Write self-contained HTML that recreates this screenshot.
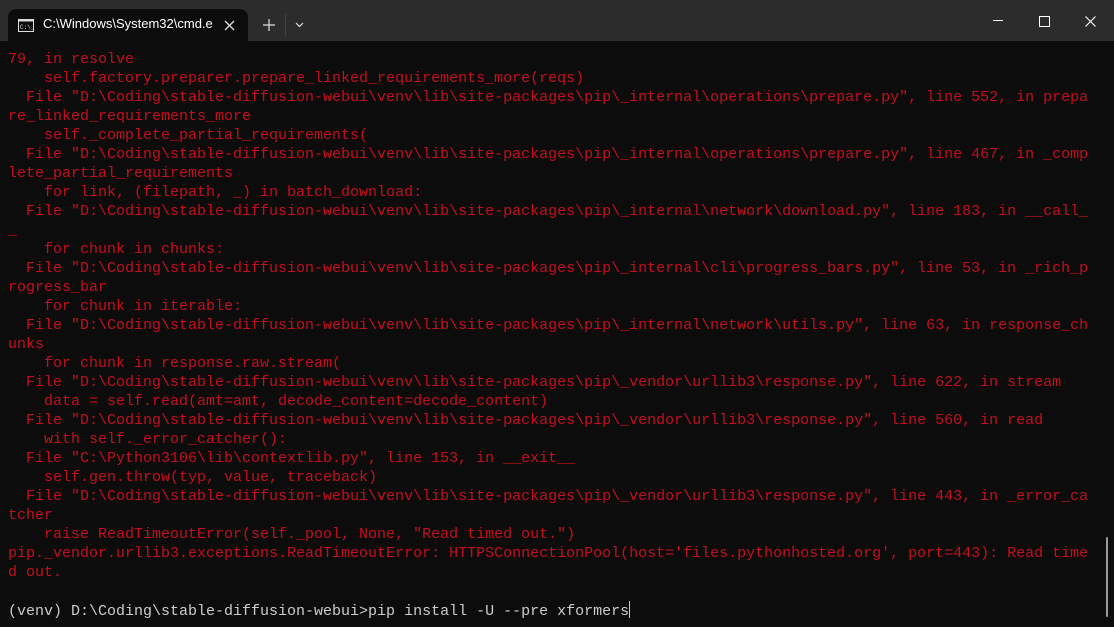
<!DOCTYPE html>
<html><head><meta charset="utf-8"><style>
html,body{margin:0;padding:0;width:1114px;height:627px;overflow:hidden;background:#0c0c0c;}
#title{position:absolute;left:0;top:0;width:1114px;height:41px;background:#2c2c2c;}
#tab{position:absolute;left:8px;top:9px;width:240px;height:32px;background:#0c0c0c;border-radius:8px 8px 0 0;}
#tab .t{position:absolute;left:35px;top:7px;font:13px "Liberation Sans",sans-serif;color:#fff;white-space:nowrap;width:172px;overflow:hidden;}
pre{position:absolute;left:8px;top:50px;margin:0;font:15px/19px "Liberation Mono",monospace;color:#c50f1f;white-space:pre;}
.w{color:#cccccc;}
.cur{display:inline-block;width:1px;height:17px;background:#ccc;vertical-align:-3px;}
#sb{position:absolute;right:6px;top:537px;width:2px;height:80px;background:#9a9a9a;border-radius:1px;}
</style></head><body>
<div id="title">
 <div id="tab">
  <svg style="position:absolute;left:10px;top:10px" width="16" height="13" viewBox="0 0 16 13"><rect x="0.5" y="0.5" width="15" height="12" fill="none" stroke="#ddd"/><rect x="0.5" y="0.5" width="15" height="2" fill="#ddd"/><text x="2" y="10" font-size="6" fill="#ddd" font-family="Liberation Mono">C:\_</text></svg>
  <div class="t">C:\Windows\System32\cmd.e</div>
  <svg style="position:absolute;left:216px;top:11px" width="11" height="11"><path d="M1 1L10 10M10 1L1 10" stroke="#ddd" stroke-width="1.3"/></svg>
 </div>
 <svg style="position:absolute;left:263px;top:19px" width="12" height="12"><path d="M6 0V12M0 6H12" stroke="#ddd" stroke-width="1.2"/></svg>
 <div style="position:absolute;left:285px;top:14px;width:1px;height:22px;background:#444"></div>
 <svg style="position:absolute;left:295px;top:22px" width="9" height="6"><path d="M1 1L4.5 4.5L8 1" stroke="#ddd" fill="none" stroke-width="1.2"/></svg>
 <div style="position:absolute;left:993px;top:20px;width:10px;height:1px;background:#fff"></div>
 <div style="position:absolute;left:1039px;top:16px;width:9px;height:9px;border:1px solid #fff"></div>
 <svg style="position:absolute;left:1085px;top:16px" width="11" height="11"><path d="M0.5 0.5L10.5 10.5M10.5 0.5L0.5 10.5" stroke="#fff" stroke-width="1.1"/></svg>
</div>
<pre>79, in resolve
    self.factory.preparer.prepare_linked_requirements_more(reqs)
  File "D:\Coding\stable-diffusion-webui\venv\lib\site-packages\pip\_internal\operations\prepare.py", line 552, in prepa
re_linked_requirements_more
    self._complete_partial_requirements(
  File "D:\Coding\stable-diffusion-webui\venv\lib\site-packages\pip\_internal\operations\prepare.py", line 467, in _comp
lete_partial_requirements
    for link, (filepath, _) in batch_download:
  File "D:\Coding\stable-diffusion-webui\venv\lib\site-packages\pip\_internal\network\download.py", line 183, in __call_
_
    for chunk in chunks:
  File "D:\Coding\stable-diffusion-webui\venv\lib\site-packages\pip\_internal\cli\progress_bars.py", line 53, in _rich_p
rogress_bar
    for chunk in iterable:
  File "D:\Coding\stable-diffusion-webui\venv\lib\site-packages\pip\_internal\network\utils.py", line 63, in response_ch
unks
    for chunk in response.raw.stream(
  File "D:\Coding\stable-diffusion-webui\venv\lib\site-packages\pip\_vendor\urllib3\response.py", line 622, in stream
    data = self.read(amt=amt, decode_content=decode_content)
  File "D:\Coding\stable-diffusion-webui\venv\lib\site-packages\pip\_vendor\urllib3\response.py", line 560, in read
    with self._error_catcher():
  File "C:\Python3106\lib\contextlib.py", line 153, in __exit__
    self.gen.throw(typ, value, traceback)
  File "D:\Coding\stable-diffusion-webui\venv\lib\site-packages\pip\_vendor\urllib3\response.py", line 443, in _error_ca
tcher
    raise ReadTimeoutError(self._pool, None, "Read timed out.")
pip._vendor.urllib3.exceptions.ReadTimeoutError: HTTPSConnectionPool(host='files.pythonhosted.org', port=443): Read time
d out.

<span class="w">(venv) D:\Coding\stable-diffusion-webui&gt;pip install -U --pre xformers<span class="cur"></span></span></pre>
<div id="sb"></div>
</body></html>
